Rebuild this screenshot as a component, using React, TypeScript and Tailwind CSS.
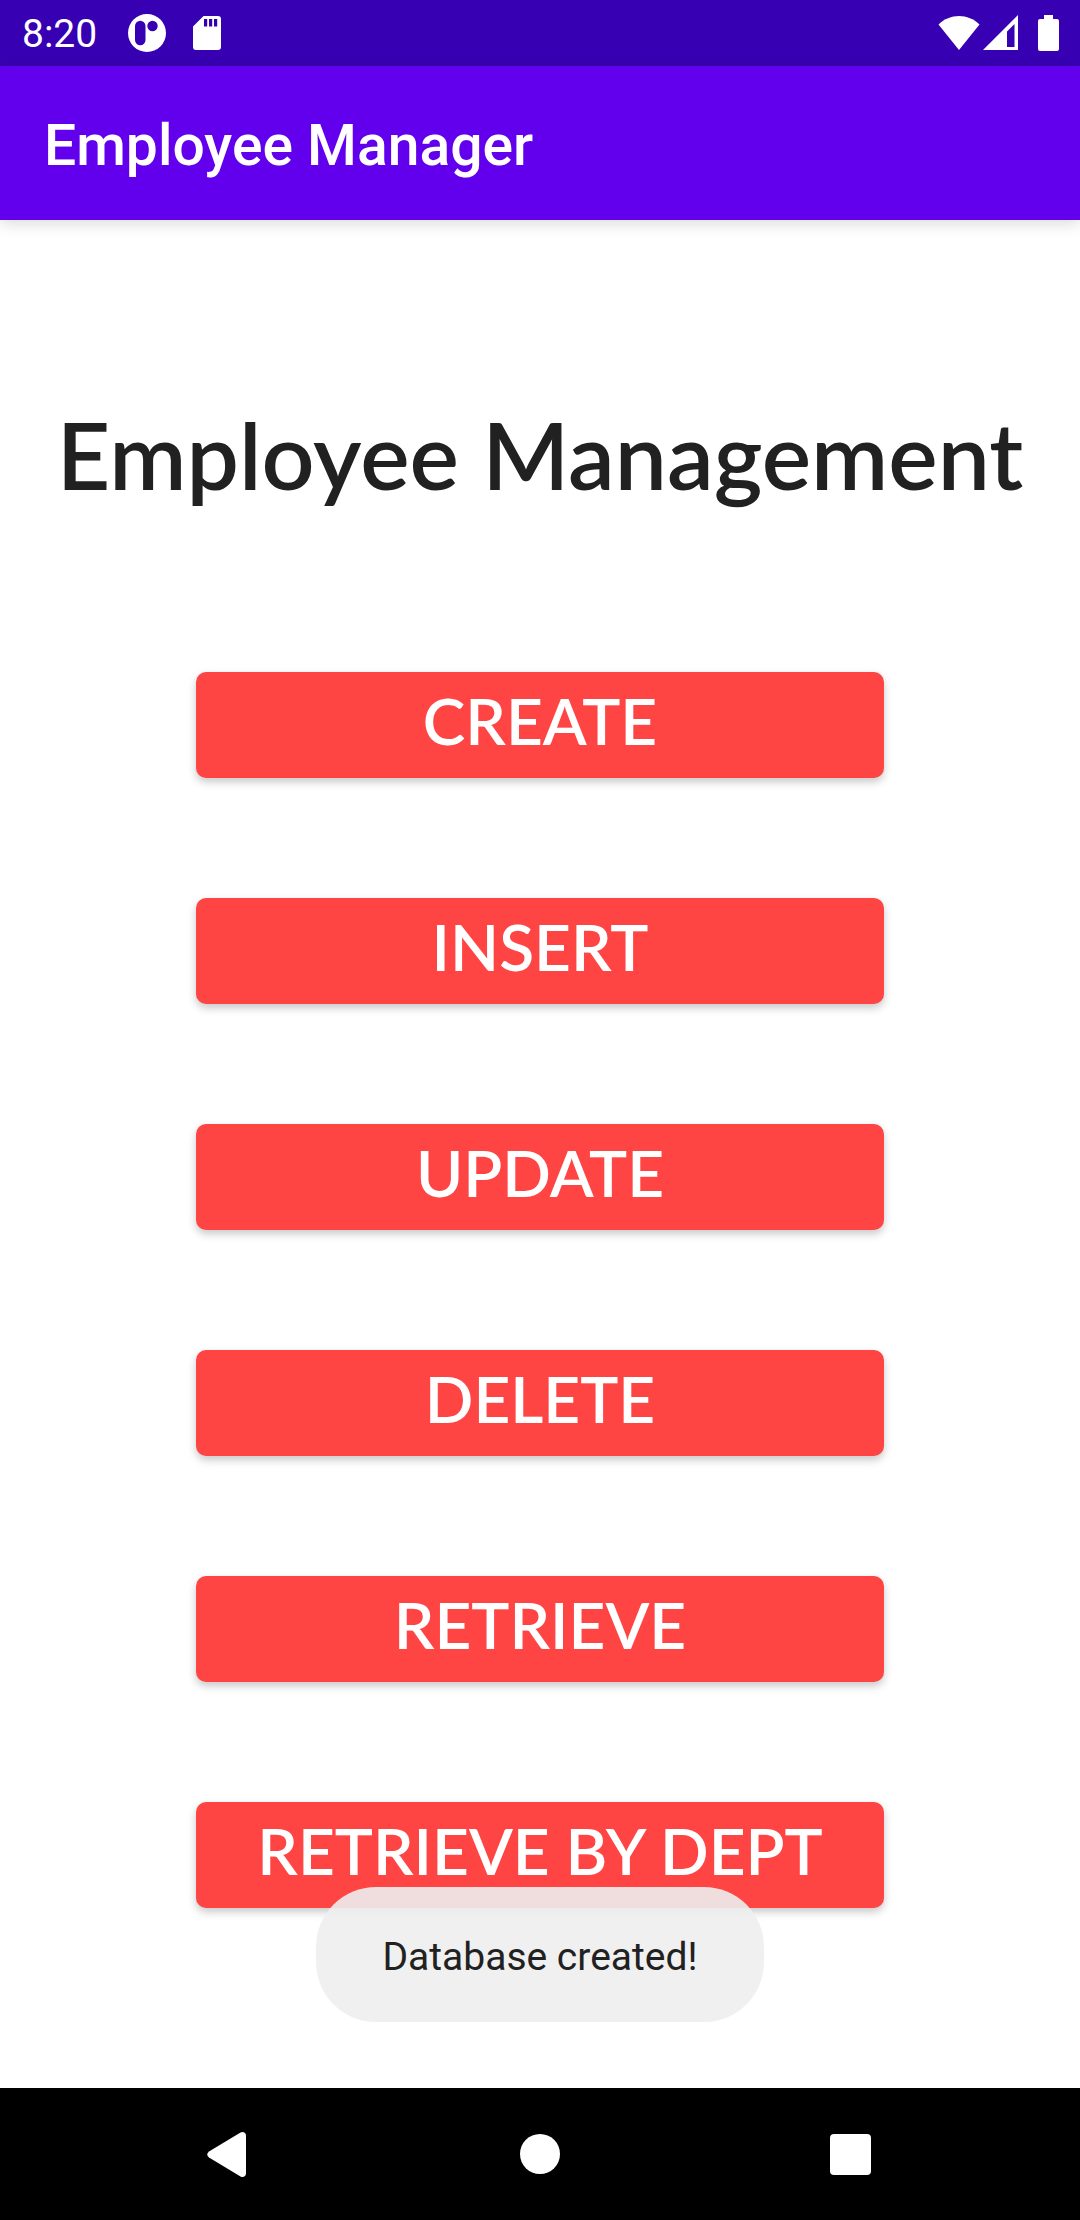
const actions = ["Create", "Insert", "Update", "Delete", "Retrieve", "Retrieve by dept"];

function StatusBar() {
  return (
    <div className="flex h-[66px] items-center justify-between bg-[#3700b3] pr-[21px] pl-[22px] text-white">
      <div className="flex items-center">
        <time className="w-[106px] pt-[2px] font-[Roboto,sans-serif] text-[39px] leading-[46px]">8:20</time>
        <svg className="h-[38px] w-[38px]" viewBox="0 0 38 38" fill="currentColor" aria-hidden="true">
          <path
            fillRule="evenodd"
            d="M19 0a19 19 0 1 1 0 38a19 19 0 0 1 0-38ZM7 12v14a5.2 5.2 0 0 0 10.500 0V12a5.200 5.200 0 0 0-10.500 0ZM24.500 6.800a5.200 5.200 0 1 0 0 10.400a5.200 5.200 0 0 0 0-10.400Z"
          />
        </svg>
        <svg className="ml-[27px] h-9 w-7" viewBox="0 0 28 36" fill="currentColor" aria-hidden="true">
          <path
            fillRule="evenodd"
            d="M10.500 1H25a3 3 0 0 1 3 3v28a3 3 0 0 1-3 3H3a3 3 0 0 1-3-3V11.500ZM11 4v7.500h3.200V4ZM16 4v7.500h3.200V4ZM21 4v7.500h3.200V4Z"
          />
        </svg>
      </div>
      <div className="flex items-center">
        <svg className="h-9 w-[42px]" viewBox="0 0 42 36" fill="currentColor" aria-hidden="true">
          <path d="M21 35L0.500 9.500C12 -2 30 -2 41.500 9.500Z" />
        </svg>
        <svg className="ml-[3px] h-9 w-[35px]" viewBox="0 0 35 36" fill="currentColor" aria-hidden="true">
          <path fillRule="evenodd" d="M35 0V35H0ZM31.500 9L24 16.500V32H31.500Z" />
        </svg>
        <svg className="ml-5 h-9 w-[21px]" viewBox="0 0 21 36" fill="currentColor" aria-hidden="true">
          <path d="M6 0h9v4h4a2 2 0 0 1 2 2v28a2 2 0 0 1-2 2H2a2 2 0 0 1-2-2V6a2 2 0 0 1 2-2h4Z" />
        </svg>
      </div>
    </div>
  );
}

function NavigationBar() {
  return (
    <nav className="grid h-[132px] grid-cols-3 bg-black px-[75px] text-white">
      <button type="button" aria-label="Back" className="flex items-center justify-center">
        <svg className="mr-2 h-[45px] w-[39px]" viewBox="0 0 39 45" fill="currentColor" aria-hidden="true">
          <path d="M33.500 0.600Q36 -0.600 38 1Q39 2 39 4V41Q39 43 38 44Q36 45.600 33.500 44.400L2 25.500Q-1.500 22.500 2 19.500Z" />
        </svg>
      </button>
      <button type="button" aria-label="Home" className="flex items-center justify-center">
        <span className="h-10 w-10 rounded-full bg-white" />
      </button>
      <button type="button" aria-label="Recent apps" className="flex items-center justify-center">
        <span className="h-[41px] w-[41px] rounded-[4px] bg-white" />
      </button>
    </nav>
  );
}

export default function App() {
  return (
    <div className="flex min-h-screen flex-col bg-white">
      <StatusBar />
      <header className="z-10 flex h-[154px] items-center bg-[#6200ee] px-11 pt-[6px] shadow-[0_4px_14px_rgba(0,0,0,0.14)]">
        <span className="font-[Roboto,sans-serif] text-[57px] leading-[66px] font-medium text-white">
          Employee Manager
        </span>
      </header>
      <main className="relative flex flex-1 flex-col items-center pt-[174px]">
        <h1 className="text-center font-[Lato,sans-serif] text-[93px] leading-[120px] font-semibold whitespace-nowrap text-[#212121]">
          Employee Management
        </h1>
        <div className="mt-[158px] flex w-full max-w-[688px] flex-col gap-[120px]">
          {actions.map((label) => (
            <button
              key={label}
              type="button"
              className="h-[106px] rounded-[10px] bg-[#ff4444] pb-2 font-[Lato,sans-serif] text-[64px] leading-[72px] font-semibold whitespace-nowrap text-white uppercase shadow-[0_4px_8px_rgba(0,0,0,0.22)]"
            >
              {label}
            </button>
          ))}
        </div>
        <div
          role="status"
          className="absolute bottom-[66px] flex h-[135px] items-center rounded-[60px] bg-[#eeeeee]/90 px-[66px] pt-1 font-[Roboto,sans-serif] text-[39px] leading-[46px] whitespace-nowrap text-[#212121]"
        >
          Database created!
        </div>
      </main>
      <NavigationBar />
    </div>
  );
}
